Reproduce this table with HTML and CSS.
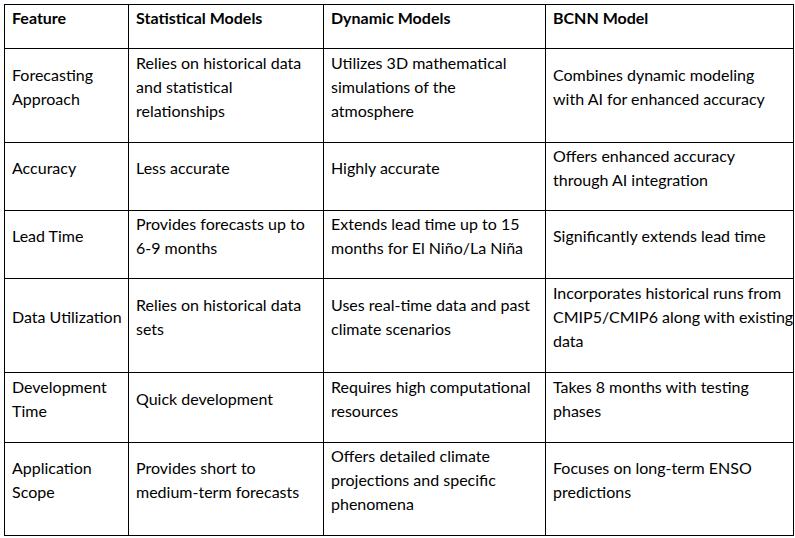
FILE: index.html
```html
<!DOCTYPE html>
<html>
<head>
<meta charset="utf-8">
<link rel="stylesheet" href="styles.css">
</head>
<body>
<table class="cmp">
  <colgroup>
    <col class="c1"><col class="c2"><col class="c3"><col class="c4">
  </colgroup>
  <tr class="r-head">
    <th>Feature</th><th>Statistical Models</th><th>Dynamic Models</th><th>BCNN Model</th>
  </tr>
  <tr class="r-tall">
    <td>Forecasting<br>Approach</td>
    <td>Relies on historical data<br>and statistical<br>relationships</td>
    <td>Utilizes 3D mathematical<br>simulations of the<br>atmosphere</td>
    <td>Combines dynamic modeling<br>with AI for enhanced accuracy</td>
  </tr>
  <tr class="r-mid">
    <td>Accuracy</td>
    <td>Less accurate</td>
    <td>Highly accurate</td>
    <td>Offers enhanced accuracy<br>through AI integration</td>
  </tr>
  <tr class="r-mid">
    <td>Lead Time</td>
    <td>Provides forecasts up to<br>6-9 months</td>
    <td>Extends lead time up to 15<br>months for El Niño/La Niña</td>
    <td>Significantly extends lead time</td>
  </tr>
  <tr class="r-tall">
    <td>Data Utilization</td>
    <td>Relies on historical data<br>sets</td>
    <td>Uses real-time data and past<br>climate scenarios</td>
    <td>Incorporates historical runs from<br>CMIP5/CMIP6 along with existing<br>data</td>
  </tr>
  <tr class="r-dev">
    <td>Development<br>Time</td>
    <td>Quick development</td>
    <td>Requires high computational<br>resources</td>
    <td>Takes 8 months with testing<br>phases</td>
  </tr>
  <tr class="r-last">
    <td>Application<br>Scope</td>
    <td>Provides short to<br>medium-term forecasts</td>
    <td>Offers detailed climate<br>projections and specific<br>phenomena</td>
    <td>Focuses on long-term ENSO<br>predictions</td>
  </tr>
</table>
</body>
</html>
```
FILE: styles.css
```css
html, body {
  margin: 0;
  padding: 0;
  background: #ffffff;
}
body {
  padding: 4px;
  font-family: Lato, "Open Sans", "Liberation Sans", sans-serif;
  font-size: 16px;
  color: #000000;
}
.cmp {
  border-collapse: collapse;
  table-layout: fixed;
  width: 789px;
}
.c1 { width: 124px; }
.c2 { width: 195px; }
.c3 { width: 222px; }
.c4 { width: 248px; }
.cmp th,
.cmp td {
  border: 1px solid #000000;
  padding: 0 2px 18px 7px;
  vertical-align: middle;
  text-align: left;
  line-height: 24px;
  white-space: nowrap;
  overflow: hidden;
}
.cmp th { font-weight: 700; }
.r-head { height: 44px; }
.r-tall { height: 94px; }
.r-mid { height: 68px; }
.r-dev { height: 70px; }
.r-last { height: 93px; }
```
